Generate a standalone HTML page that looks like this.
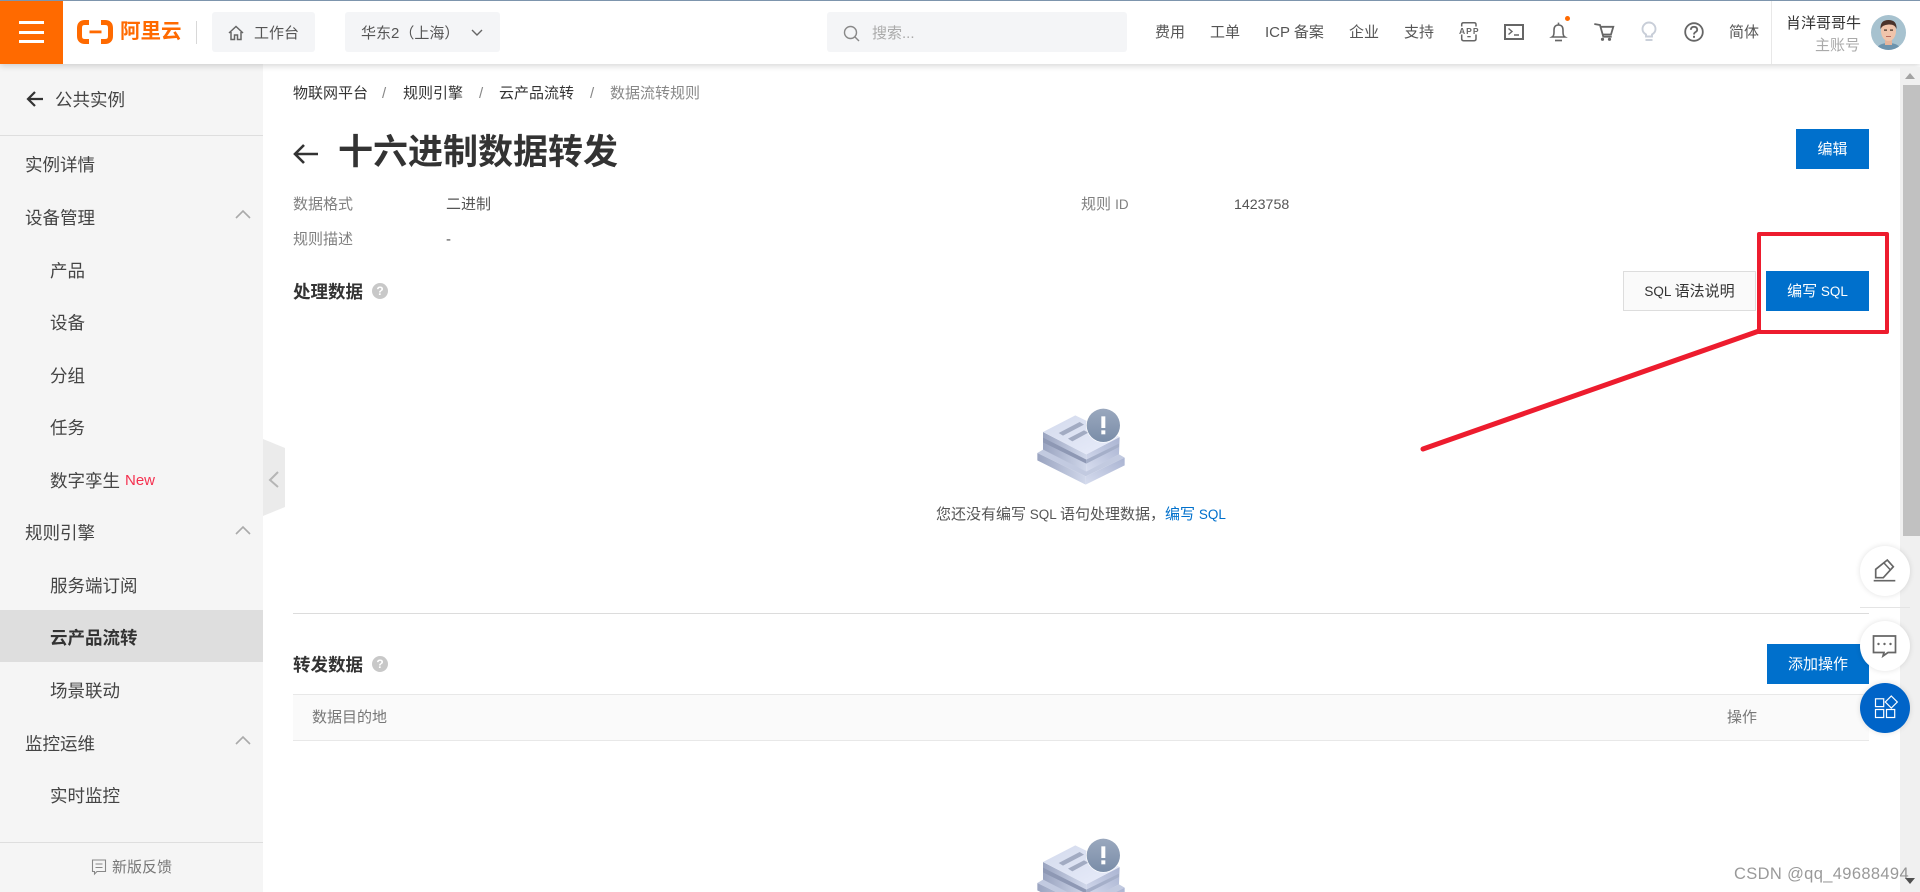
<!DOCTYPE html>
<html lang="zh-CN">
<head>
<meta charset="utf-8">
<title>十六进制数据转发</title>
<style>
html,body{margin:0;padding:0;width:1920px;height:892px;overflow:hidden;background:#fff}
body{position:relative;font-family:"Liberation Sans","Noto Sans CJK SC",sans-serif;color:#333;font-size:15px}
.t{position:absolute;white-space:nowrap;line-height:24px;height:24px;margin-top:1px}
.a{position:absolute}
svg{position:absolute;overflow:visible}
.side{font-size:17.5px;color:#444}
.nav{font-size:15px;color:#555}
.lab{font-size:15px;color:#808080}
.val{font-size:15px;color:#555}
.crumb{font-size:15px;color:#333}
.sep{font-size:15px;color:#888}
.l{font-size:13.5px}
.btn{position:absolute;height:40px;line-height:40px;text-align:center;font-size:15px;box-sizing:border-box}
.blue{background:#0070cc;color:#fff;line-height:42px}
.fab{position:absolute;width:50px;height:50px;border-radius:50%;background:#fff;box-shadow:0 0 6px rgba(0,0,0,.12)}
.sh{font-size:17.5px;font-weight:700;color:#333}
.q{position:absolute;width:16px;height:16px;border-radius:50%;background:#c8c8c8;color:#fff;font-size:12px;font-weight:700;line-height:16px;text-align:center}
</style>
</head>
<body>

<!-- sidebar -->
<div class="a" style="left:0;top:64px;width:263px;height:828px;background:#f5f5f5"></div>
<div class="a" style="left:0;top:135px;width:263px;height:1px;background:#dedede"></div>
<div class="a" style="left:0;top:610px;width:263px;height:52px;background:#dedede"></div>
<div class="a" style="left:0;top:842px;width:263px;height:1px;background:#dedede"></div>

<svg style="left:26px;top:90px" width="18" height="18" viewBox="0 0 18 18"><path d="M17 9H2M9 2L2 9l7 7" fill="none" stroke="#333" stroke-width="2.2"/></svg>
<div class="t side" style="left:55px;top:87px">公共实例</div>
<div class="t side" style="left:25px;top:152px">实例详情</div>
<div class="t side" style="left:25px;top:205px">设备管理</div>
<div class="t side" style="left:50px;top:258px">产品</div>
<div class="t side" style="left:50px;top:310px">设备</div>
<div class="t side" style="left:50px;top:363px">分组</div>
<div class="t side" style="left:50px;top:415px">任务</div>
<div class="t side" style="left:50px;top:468px">数字孪生</div>
<div class="t" style="left:125px;top:468px;color:#f5304f;font-size:15px">New</div>
<div class="t side" style="left:25px;top:520px">规则引擎</div>
<div class="t side" style="left:50px;top:573px">服务端订阅</div>
<div class="t side" style="left:50px;top:625px;font-weight:700;color:#333">云产品流转</div>
<div class="t side" style="left:50px;top:678px">场景联动</div>
<div class="t side" style="left:25px;top:731px">监控运维</div>
<div class="t side" style="left:50px;top:783px">实时监控</div>

<svg style="left:235px;top:209px" width="16" height="10" viewBox="0 0 16 10"><path d="M1 9l7-7 7 7" fill="none" stroke="#aaa" stroke-width="1.6"/></svg>
<svg style="left:235px;top:525px" width="16" height="10" viewBox="0 0 16 10"><path d="M1 9l7-7 7 7" fill="none" stroke="#aaa" stroke-width="1.6"/></svg>
<svg style="left:235px;top:735px" width="16" height="10" viewBox="0 0 16 10"><path d="M1 9l7-7 7 7" fill="none" stroke="#aaa" stroke-width="1.6"/></svg>

<svg style="left:91px;top:859px" width="16" height="16" viewBox="0 0 16 16"><path d="M1.5 1h13v11.5H6L3.5 15v-2.5h-2zM4.5 5h7M4.5 8.500h7" fill="none" stroke="#888" stroke-width="1.1"/></svg>
<div class="t" style="left:112px;top:855px;color:#777;font-size:15px">新版反馈</div>

<!-- collapse tab -->
<svg style="left:263px;top:439px" width="22" height="77" viewBox="0 0 22 77"><path d="M0 0L22 9V68L0 77Z" fill="#ebebeb"/><path d="M15 33L7 41l8 7" fill="none" stroke="#b5b5b5" stroke-width="2"/></svg>

<!-- header -->
<div class="a" style="left:0;top:0;width:1920px;height:64px;background:#fff;box-shadow:0 2px 6px rgba(0,0,0,.16)"></div>
<div class="a" style="left:0;top:0;width:1920px;height:1px;background:#7d95ad"></div>
<div class="a" style="left:0;top:1px;width:63px;height:63px;background:#ff6a00"></div>
<div class="a" style="left:19px;top:21px;width:25px;height:2.500px;background:#fff"></div>
<div class="a" style="left:19px;top:31px;width:25px;height:2.500px;background:#fff"></div>
<div class="a" style="left:19px;top:40px;width:25px;height:2.500px;background:#fff"></div>

<svg style="left:77px;top:19.500px" width="36" height="24" viewBox="0 0 36 24"><path d="M12 2.500H8Q2.500 2.500 2.500 8V16Q2.500 21.500 8 21.500H12M24 2.500H28Q33.500 2.500 33.500 8V16Q33.500 21.500 28 21.500H24" fill="none" stroke="#ff6a00" stroke-width="5"/><rect x="12.500" y="10.500" width="12" height="2.800" fill="#ff6a00"/></svg>
<div class="t" style="left:120px;top:18px;color:#ff6a00;font-size:20.500px;font-weight:700;line-height:25px;height:25px">阿里云</div>
<div class="a" style="left:196px;top:21px;width:1px;height:23px;background:#d8d8d8"></div>

<div class="a" style="left:212px;top:12px;width:103px;height:40px;background:#f4f5f7;border-radius:3px"></div>
<svg style="left:228px;top:25px" width="16" height="16" viewBox="0 0 16 16"><path d="M1 8L8 1.500 15 8M3 7v7.500h3.500V10h3v4.500H13V7" fill="none" stroke="#666" stroke-width="1.500"/></svg>
<div class="t nav" style="left:254px;top:21px">工作台</div>

<div class="a" style="left:345px;top:12px;width:155px;height:40px;background:#f4f5f7;border-radius:3px"></div>
<div class="t nav" style="left:361px;top:21px">华东2（上海）</div>
<svg style="left:471px;top:29px" width="12" height="8" viewBox="0 0 12 8"><path d="M1 1l5 5 5-5" fill="none" stroke="#666" stroke-width="1.400"/></svg>

<div class="a" style="left:827px;top:12px;width:300px;height:40px;background:#f4f5f7;border-radius:3px"></div>
<svg style="left:843px;top:25px" width="17" height="17" viewBox="0 0 17 17"><circle cx="7.500" cy="7.500" r="6" fill="none" stroke="#888" stroke-width="1.400"/><path d="M12 12l4 4" stroke="#888" stroke-width="1.400"/></svg>
<div class="t" style="left:872px;top:21px;color:#aaa;font-size:15px">搜索...</div>

<div class="t nav" style="left:1155px;top:20px">费用</div>
<div class="t nav" style="left:1210px;top:20px">工单</div>
<div class="t nav" style="left:1265px;top:20px">ICP 备案</div>
<div class="t nav" style="left:1349px;top:20px">企业</div>
<div class="t nav" style="left:1404px;top:20px">支持</div>

<!-- APP icon -->
<svg style="left:1459px;top:22px" width="20" height="20" viewBox="0 0 20 20"><path d="M2.700 4.500V2.500q0-1.800 1.800-1.800h10.700q1.800 0 1.800 1.800v2M2.700 12.500v4.400q0 1.800 1.800 1.800h10.700q1.800 0 1.800-1.800v-4.400" fill="none" stroke="#666" stroke-width="1.500"/><rect x="8.300" y="14" width="3.400" height="1.300" fill="#666"/><text x="0" y="11.800" font-size="8.500" font-weight="700" fill="#666" font-family="Liberation Sans,sans-serif" textLength="19.500" lengthAdjust="spacing">APP</text></svg>
<!-- terminal -->
<svg style="left:1504px;top:24px" width="20" height="16" viewBox="0 0 20 16"><rect x="1" y="1" width="18" height="14" fill="none" stroke="#666" stroke-width="2"/><path d="M4.500 4.500L8 7.500 4.500 10.500M10 11h5" fill="none" stroke="#666" stroke-width="1.400"/></svg>
<!-- bell -->
<svg style="left:1551px;top:22px" width="15" height="20" viewBox="0 0 15 20"><path d="M1.200 15Q3 14 3 10V8Q3 3 7.500 3T12 8V10Q12 14 13.800 15ZM7.500 .6V3" fill="none" stroke="#666" stroke-width="1.600"/><path d="M4 18.500h7" stroke="#666" stroke-width="1.700"/></svg>
<div class="a" style="left:1565px;top:16px;width:5px;height:5px;border-radius:50%;background:#ff6a00"></div>
<!-- cart -->
<svg style="left:1593px;top:23px" width="22" height="18" viewBox="0 0 22 18"><path d="M1.300 1L7 2L10.300 13.700H18.700M7 3.800H20.300L18 11.500H9.500" fill="none" stroke="#666" stroke-width="1.800"/><circle cx="9.500" cy="16.300" r="1.600" fill="#666"/><circle cx="16.500" cy="16.300" r="1.600" fill="#666"/></svg>
<!-- bulb -->
<svg style="left:1641px;top:22px" width="16" height="20" viewBox="0 0 16 20"><path d="M5 14.500V12.500Q1.500 10.500 1.500 7A6.500 6.500 0 0 1 14.500 7Q14.500 10.500 11 12.500V14.500Z" fill="none" stroke="#c8ced8" stroke-width="1.900"/><path d="M4.500 18h7" stroke="#c8ced8" stroke-width="1.900"/></svg>
<!-- help -->
<svg style="left:1684px;top:22px" width="20" height="20" viewBox="0 0 20 20"><circle cx="10" cy="10" r="8.800" fill="none" stroke="#666" stroke-width="1.800"/><path d="M6.800 7.800Q7 4.800 10 4.800T13.200 7.600Q13.200 9.200 11.600 10T10 12.500" fill="none" stroke="#666" stroke-width="1.800"/><rect x="9" y="13.800" width="2" height="2" fill="#666"/></svg>

<div class="t nav" style="left:1729px;top:20px">简体</div>
<div class="a" style="left:1771px;top:1px;width:1px;height:63px;background:#e8e8e8"></div>
<div class="t" style="left:1786px;top:11px;font-size:15px;color:#333">肖洋哥哥牛</div>
<div class="t" style="left:1815px;top:33px;font-size:15px;color:#aaa">主账号</div>
<!-- avatar -->
<svg style="left:1871px;top:15px" width="35" height="35" viewBox="0 0 35 35"><defs><clipPath id="c"><circle cx="17.500" cy="17.500" r="17.500"/></clipPath></defs><g clip-path="url(#c)"><rect width="35" height="35" fill="#a7c2cf"/><path d="M5 35q2-7 12.500-7T30 35z" fill="#6d93ad"/><rect x="14" y="22" width="7" height="8" fill="#e6b59c"/><ellipse cx="17.500" cy="16" rx="7.500" ry="10" fill="#f0c4ab"/><path d="M9.500 14Q9 5 17.500 5T25.500 14Q24 9 17.500 9.500T9.500 14z" fill="#4a332b"/><rect x="13" y="14.500" width="3" height="1.200" fill="#3a2a22"/><rect x="19" y="14.500" width="3" height="1.200" fill="#3a2a22"/><rect x="15" y="21" width="5" height="1" fill="#b86a5c"/></g></svg>

<!-- scrollbar -->
<div class="a" style="left:1900px;top:67px;width:20px;height:825px;background:#f0f0f0"></div>
<div class="a" style="left:1903px;top:85px;width:17px;height:451px;background:#c1c1c1"></div>
<svg style="left:1905px;top:73px" width="10" height="6" viewBox="0 0 10 6"><path d="M5 0l5 6H0z" fill="#a3a3a3"/></svg>
<svg style="left:1905px;top:878px" width="10" height="6" viewBox="0 0 10 6"><path d="M5 6l5-6H0z" fill="#505050"/></svg>

<!-- breadcrumb -->
<div class="t crumb" style="left:293px;top:81px">物联网平台</div>
<div class="t sep" style="left:382px;top:81px">/</div>
<div class="t crumb" style="left:403px;top:81px">规则引擎</div>
<div class="t sep" style="left:479px;top:81px">/</div>
<div class="t crumb" style="left:499px;top:81px">云产品流转</div>
<div class="t sep" style="left:590px;top:81px">/</div>
<div class="t" style="left:610px;top:81px;color:#888;font-size:15px">数据流转规则</div>

<!-- title -->
<svg style="left:293px;top:143px" width="26" height="22" viewBox="0 0 26 22"><path d="M25 11H2M11 2L2 11l9 9" fill="none" stroke="#333" stroke-width="2.600"/></svg>
<div class="t" style="left:338px;top:128px;font-size:35px;font-weight:700;color:#333;line-height:48px;height:48px">十六进制数据转发</div>
<div class="btn blue" style="left:1796px;top:129px;width:73px">编辑</div>

<!-- meta -->
<div class="t lab" style="left:293px;top:192px">数据格式</div>
<div class="t val" style="left:446px;top:192px">二进制</div>
<div class="t lab" style="left:1081px;top:192px">规则 <span class="l">ID</span></div>
<div class="t val" style="left:1234px;top:192px;font-size:14.2px">1423758</div>
<div class="t lab" style="left:293px;top:227px">规则描述</div>
<div class="t val" style="left:446px;top:227px">-</div>

<!-- section 1 -->
<div class="t sh" style="left:293px;top:279px">处理数据</div>
<div class="q" style="left:372px;top:283px">?</div>
<div class="btn" style="left:1623px;top:271px;width:133px;background:#fafafa;border:1px solid #ddd;color:#333"><span class="l">SQL </span>语法说明</div>
<div class="btn blue" style="left:1766px;top:271px;width:103px">编写<span class="l"> SQL</span></div>

<!-- illustration 1 -->
<svg style="left:1033.300px;top:406.700px" width="96.670" height="80" viewBox="400 80 290 240">
<defs>
<linearGradient id="g1" x1="0" y1="0" x2="1" y2="1"><stop offset="0" stop-color="#d3daec"/><stop offset="1" stop-color="#e9edfb"/></linearGradient>
<linearGradient id="g2" x1="0" y1="0" x2="1" y2="0"><stop offset="0" stop-color="#9aa4c0"/><stop offset="1" stop-color="#d0d7ea"/></linearGradient>
<linearGradient id="g3" x1="0" y1="1" x2="1" y2="0"><stop offset="0" stop-color="#d6dcee"/><stop offset="1" stop-color="#aab4d2"/></linearGradient>
<linearGradient id="g4" x1="0" y1="0" x2="0" y2="1"><stop offset="0" stop-color="#9aa8be"/><stop offset="1" stop-color="#7a8da8"/></linearGradient>
</defs>
<path d="M413 218L430 208L560 272L658 222L675 232L558 288Z" fill="#c2cae0"/>
<path d="M413 218L558 288V313L413 240Z" fill="url(#g2)"/>
<path d="M558 288L675 232V255L558 313Z" fill="url(#g3)"/>
<path d="M430 155L560 222V274L430 208Z" fill="url(#g2)"/>
<path d="M560 222L660 170L658 222L560 274Z" fill="url(#g3)"/>
<path d="M430 172L560 238V250L430 186Z" fill="#8e98b4"/>
<path d="M560 238L658 190V200L560 250Z" fill="#a5afc9"/>
<path d="M430 155L527 105L660 170L560 222Z" fill="url(#g1)"/>
<path d="M477 158L540 125L553 133L490 166Z" fill="#a2abc2"/>
<path d="M505 175L553 150L566 157L518 183Z" fill="#a2abc2"/>
<circle cx="611" cy="135" r="52" fill="#fff"/>
<circle cx="611" cy="135" r="50" fill="url(#g4)"/>
<rect x="605" y="108" width="12" height="35" fill="#fff"/>
<rect x="605" y="150" width="12" height="12" fill="#fff"/>
</svg>
<div class="t" style="left:936px;top:502px;font-size:15px;color:#555">您还没有编写<span class="l"> SQL </span>语句处理数据，<span style="color:#0070cc">编写<span class="l"> SQL</span></span></div>

<div class="a" style="left:293px;top:613px;width:1576px;height:1px;background:#dcdcdc"></div>

<!-- section 2 -->
<div class="t sh" style="left:293px;top:652px">转发数据</div>
<div class="q" style="left:372px;top:656px">?</div>
<div class="btn blue" style="left:1767px;top:644px;width:102px">添加操作</div>

<div class="a" style="left:293px;top:694px;width:1576px;height:47px;background:#fafafa;border-top:1px solid #e8e8e8;border-bottom:1px solid #e8e8e8;box-sizing:border-box"></div>
<div class="t lab" style="left:312px;top:705px;color:#777">数据目的地</div>
<div class="t lab" style="left:1727px;top:705px;color:#777">操作</div>

<!-- illustration 2 -->
<svg style="left:1033.300px;top:836.700px" width="96.670" height="80" viewBox="400 80 290 240">
<path d="M413 218L430 208L560 272L658 222L675 232L558 288Z" fill="#c2cae0"/>
<path d="M413 218L558 288V313L413 240Z" fill="url(#g2)"/>
<path d="M558 288L675 232V255L558 313Z" fill="url(#g3)"/>
<path d="M430 155L560 222V274L430 208Z" fill="url(#g2)"/>
<path d="M560 222L660 170L658 222L560 274Z" fill="url(#g3)"/>
<path d="M430 172L560 238V250L430 186Z" fill="#8e98b4"/>
<path d="M560 238L658 190V200L560 250Z" fill="#a5afc9"/>
<path d="M430 155L527 105L660 170L560 222Z" fill="url(#g1)"/>
<path d="M477 158L540 125L553 133L490 166Z" fill="#a2abc2"/>
<path d="M505 175L553 150L566 157L518 183Z" fill="#a2abc2"/>
<circle cx="611" cy="135" r="52" fill="#fff"/>
<circle cx="611" cy="135" r="50" fill="url(#g4)"/>
<rect x="605" y="108" width="12" height="35" fill="#fff"/>
<rect x="605" y="150" width="12" height="12" fill="#fff"/>
</svg>

<!-- floating -->
<div class="fab" style="left:1860px;top:546px"><svg style="left:0;top:0" width="50" height="50" viewBox="0 0 50 50"><path d="M13.700 34.700H35.300" stroke="#666" stroke-width="1.600"/><path d="M15.700 31.700V23.300L27.300 14L33.300 20.700L23.300 31.700Z" fill="none" stroke="#666" stroke-width="1.700"/><path d="M24 17L30 23.500" stroke="#666" stroke-width="1.500"/></svg></div>
<div class="a" style="left:1860px;top:607px;width:50px;height:1px;background:#e4e4e4"></div>
<div class="fab" style="left:1860px;top:621px"><svg style="left:0;top:0" width="50" height="50" viewBox="0 0 50 50"><path d="M13.500 15H35.500V31.500H28L23 35L24 31.500H13.500Z" fill="none" stroke="#666" stroke-width="1.700"/><circle cx="18.500" cy="23" r="1.200" fill="#666"/><circle cx="24.500" cy="23" r="1.200" fill="#666"/><circle cx="30.500" cy="23" r="1.200" fill="#666"/></svg></div>
<div class="fab" style="left:1860px;top:683px;background:#0064c8"><svg style="left:0;top:0" width="50" height="50" viewBox="0 0 50 50"><g fill="none" stroke="#fff" stroke-width="1.200"><rect x="15.500" y="15.800" width="8.200" height="7.800"/><rect x="15.500" y="26.500" width="8.200" height="8"/><rect x="26.500" y="26.500" width="8.200" height="8"/><path d="M31.300 13L37.300 19L31.300 25L25.300 19Z"/></g></svg></div>

<!-- annotation -->
<svg style="left:0;top:0" width="1920" height="892" viewBox="0 0 1920 892">
<rect x="1759" y="234" width="128" height="98" fill="none" stroke="#ed1c2e" stroke-width="4" stroke-linejoin="round"/>
<path d="M1423 449L1759 331" stroke="#ed1c2e" stroke-width="5" stroke-linecap="round"/>
</svg>

<!-- watermark -->
<div class="t" style="left:1734px;top:861px;font-size:16.500px;color:rgba(90,90,90,.62);letter-spacing:.35px">CSDN @qq_49688494</div>

</body>
</html>
